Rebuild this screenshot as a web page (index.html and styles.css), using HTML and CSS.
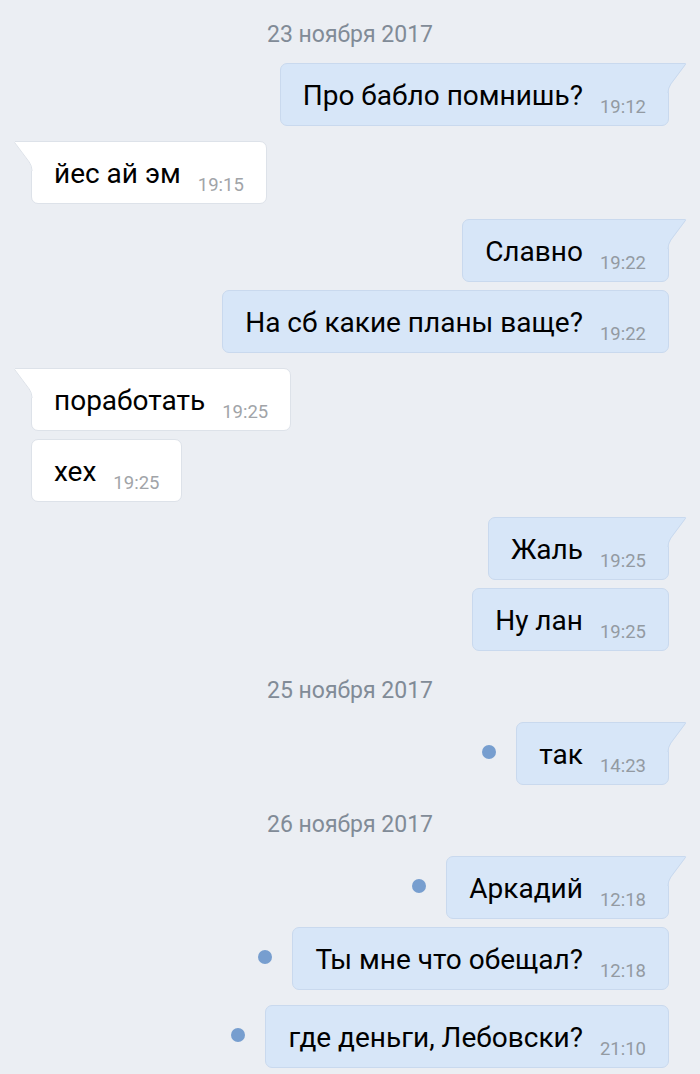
FILE: index.html
```html
<!DOCTYPE html>
<html lang="ru">
<head>
    <meta charset="UTF-8">
    <meta name="viewport" content="width=device-width, initial-scale=1.0">
    <title>Сообщения</title>
    <link rel="stylesheet" href="styles.css">
</head>
<body>
    <div class="chat">
        <div class="date first">23 ноября 2017</div>

        <div class="msg out">
            <div class="bubble tailed">
                <span class="text">Про бабло помнишь?</span><span class="time">19:12</span>
                <svg class="tail" viewBox="0 0 20 30"><path class="tail-fill" d="M0 0H18Q19.6 0 18.7 1.4L4.2 21Q1.6 24.8 1.4 30H0Z"/><path class="tail-line" d="M0 0.5H18Q19 0.6 18.3 1.6L3.8 21Q1.1 24.8 0.9 30"/></svg>
            </div>
        </div>

        <div class="msg in">
            <div class="bubble tailed">
                <span class="text">йес ай эм</span><span class="time">19:15</span>
                <svg class="tail" viewBox="0 0 20 30"><path class="tail-fill" d="M0 0H18Q19.6 0 18.7 1.4L4.2 21Q1.6 24.8 1.4 30H0Z"/><path class="tail-line" d="M0 0.5H18Q19 0.6 18.3 1.6L3.8 21Q1.1 24.8 0.9 30"/></svg>
            </div>
        </div>

        <div class="msg out">
            <div class="bubble tailed">
                <span class="text">Славно</span><span class="time">19:22</span>
                <svg class="tail" viewBox="0 0 20 30"><path class="tail-fill" d="M0 0H18Q19.6 0 18.7 1.4L4.2 21Q1.6 24.8 1.4 30H0Z"/><path class="tail-line" d="M0 0.5H18Q19 0.6 18.3 1.6L3.8 21Q1.1 24.8 0.9 30"/></svg>
            </div>
        </div>
        <div class="msg out next">
            <div class="bubble">
                <span class="text">На сб какие планы ваще?</span><span class="time">19:22</span>
            </div>
        </div>

        <div class="msg in">
            <div class="bubble tailed">
                <span class="text">поработать</span><span class="time">19:25</span>
                <svg class="tail" viewBox="0 0 20 30"><path class="tail-fill" d="M0 0H18Q19.6 0 18.7 1.4L4.2 21Q1.6 24.8 1.4 30H0Z"/><path class="tail-line" d="M0 0.5H18Q19 0.6 18.3 1.6L3.8 21Q1.1 24.8 0.9 30"/></svg>
            </div>
        </div>
        <div class="msg in next">
            <div class="bubble">
                <span class="text">хех</span><span class="time">19:25</span>
            </div>
        </div>

        <div class="msg out">
            <div class="bubble tailed">
                <span class="text">Жаль</span><span class="time">19:25</span>
                <svg class="tail" viewBox="0 0 20 30"><path class="tail-fill" d="M0 0H18Q19.6 0 18.7 1.4L4.2 21Q1.6 24.8 1.4 30H0Z"/><path class="tail-line" d="M0 0.5H18Q19 0.6 18.3 1.6L3.8 21Q1.1 24.8 0.9 30"/></svg>
            </div>
        </div>
        <div class="msg out next">
            <div class="bubble">
                <span class="text">Ну лан</span><span class="time">19:25</span>
            </div>
        </div>

        <div class="date">25 ноября 2017</div>

        <div class="msg out">
            <span class="dot"></span>
            <div class="bubble tailed">
                <span class="text">так</span><span class="time">14:23</span>
                <svg class="tail" viewBox="0 0 20 30"><path class="tail-fill" d="M0 0H18Q19.6 0 18.7 1.4L4.2 21Q1.6 24.8 1.4 30H0Z"/><path class="tail-line" d="M0 0.5H18Q19 0.6 18.3 1.6L3.8 21Q1.1 24.8 0.9 30"/></svg>
            </div>
        </div>

        <div class="date">26 ноября 2017</div>

        <div class="msg out">
            <span class="dot"></span>
            <div class="bubble tailed">
                <span class="text">Аркадий</span><span class="time">12:18</span>
                <svg class="tail" viewBox="0 0 20 30"><path class="tail-fill" d="M0 0H18Q19.6 0 18.7 1.4L4.2 21Q1.6 24.8 1.4 30H0Z"/><path class="tail-line" d="M0 0.5H18Q19 0.6 18.3 1.6L3.8 21Q1.1 24.8 0.9 30"/></svg>
            </div>
        </div>
        <div class="msg out next">
            <span class="dot"></span>
            <div class="bubble">
                <span class="text">Ты мне что обещал?</span><span class="time">12:18</span>
            </div>
        </div>
        <div class="msg out">
            <span class="dot"></span>
            <div class="bubble">
                <span class="text">где деньги, Лебовски?</span><span class="time">21:10</span>
            </div>
        </div>
    </div>
</body>
</html>
```

FILE: styles.css
```css
body,html{
    margin: 0;
    height: 100%;
    background-color: #ebeef3;
    font-family: Roboto, 'Noto Sans', Arial, sans-serif;
    overflow: hidden;
}
.chat{
    display: flex;
    flex-direction: column;
    padding: 7px 31px 0 31px;
}
.date{
    margin-top: 15px;
    height: 56px;
    padding-top: 10px;
    box-sizing: border-box;
    line-height: 30px;
    text-align: center;
    font-size: 23px;
    color: #818b97;
}
.date.first{
    margin-top: 0;
    padding-top: 13px;
}
.msg{
    display: flex;
    align-items: center;
    margin-top: 15px;
}
.msg.next{
    margin-top: 8px;
}
.date + .msg{
    margin-top: 0;
}
.out{
    justify-content: flex-end;
}
.in{
    justify-content: flex-start;
}
.bubble{
    position: relative;
    display: flex;
    align-items: flex-end;
    height: 63px;
    box-sizing: border-box;
    padding: 0 22px 9px 22px;
    border-radius: 7px;
    border: 1px solid #c9d9ee;
    background-color: #d7e6f8;
}
.in .bubble{
    background-color: #ffffff;
    border-color: #dde2e9;
}
.out .tailed{
    border-top-right-radius: 0;
}
.in .tailed{
    border-top-left-radius: 0;
}
.text{
    font-size: 28px;
    line-height: 28px;
    margin-bottom: 6px;
    color: #000000;
    white-space: nowrap;
}
.time{
    font-size: 18.5px;
    line-height: 18.5px;
    margin-left: 17px;
    color: #939aa2;
}
.in .time{
    color: #a1a4a8;
}
.tail{
    position: absolute;
    top: -1px;
    width: 20px;
    height: 30px;
}
.out .tail{
    right: -19px;
}
.in .tail{
    left: -19px;
    transform: scaleX(-1);
}
.tail-fill{
    fill: #d7e6f8;
}
.tail-line{
    fill: none;
    stroke: #c9d9ee;
    stroke-width: 1;
}
.in .tail-fill{
    fill: #ffffff;
}
.in .tail-line{
    stroke: #dde2e9;
}
.dot{
    width: 14px;
    height: 14px;
    border-radius: 50%;
    background-color: #779ecf;
    margin-right: 20px;
    margin-bottom: 4px;
}
```
